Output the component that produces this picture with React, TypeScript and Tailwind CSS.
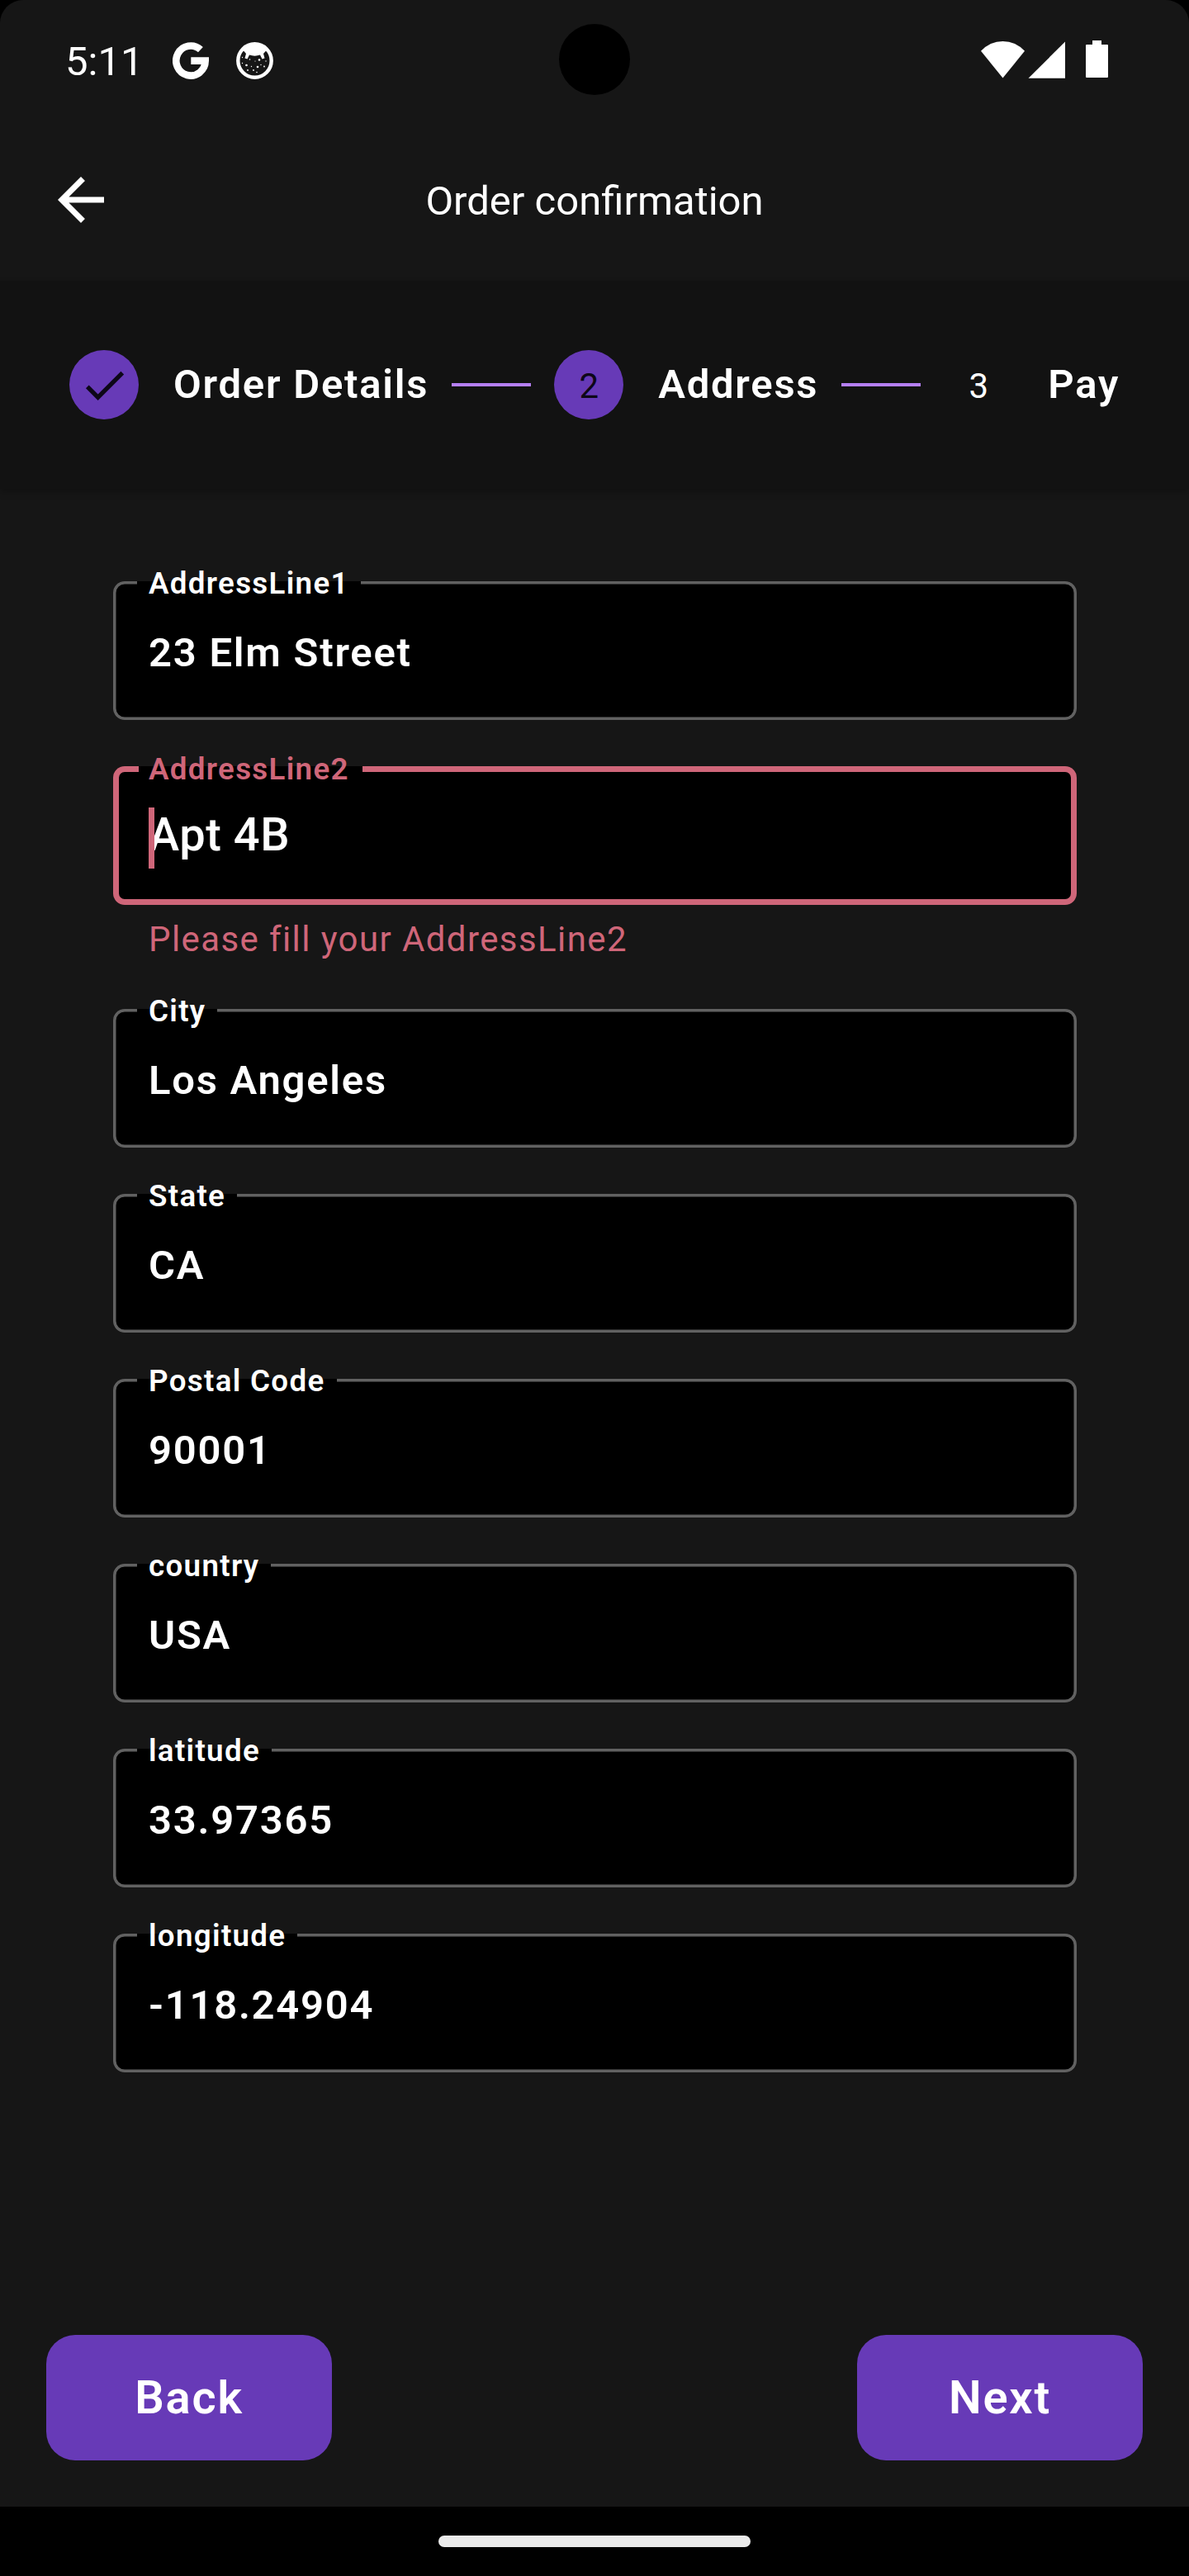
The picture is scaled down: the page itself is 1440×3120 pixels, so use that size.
import React from "react";

function GoogleIcon() {
  return (
    <svg className="size-[45px]" viewBox="0 0 45 45" fill="none">
      <path d="M33.9 9.2A17.7 18 0 1 0 39.7 22.6H22.3" stroke="#fff" strokeWidth="8.6" />
    </svg>
  );
}

function CatIcon() {
  return (
    <svg className="size-[45px]" viewBox="0 0 45 45">
      <circle cx="22.5" cy="22.5" r="20.2" fill="none" stroke="#fff" strokeWidth="4.4" />
      <path
        d="M7 8.5C15-1 30-1 38 8.5L35.5 11.2L33 14L34.5 19.5L31.5 20.5L29 15.5C25 17 20 17 16 15.5L13.5 20.5L10.5 19.5L12 14L9 10.5Z"
        fill="#fff"
      />
      <g fill="#fff">
        <circle cx="12.5" cy="28" r="1.3" />
        <circle cx="28" cy="21.5" r="1.3" />
        <circle cx="26" cy="30" r="1.3" />
        <circle cx="16.5" cy="21" r="0.8" />
        <circle cx="23" cy="23" r="0.6" />
        <circle cx="18.5" cy="29.5" r="0.7" />
        <circle cx="14" cy="34" r="0.9" />
        <circle cx="21" cy="34" r="0.9" />
        <circle cx="25" cy="36.5" r="0.8" />
        <circle cx="34" cy="29.5" r="0.9" />
        <circle cx="30" cy="27.5" r="0.7" />
        <circle cx="36" cy="23" r="0.7" />
        <circle cx="7.5" cy="18.5" r="0.7" />
        <circle cx="7.5" cy="25.5" r="0.7" />
      </g>
    </svg>
  );
}

function StatusBar() {
  return (
    <div className="relative flex h-[144px] items-center px-[79px]">
      <span className="mt-[4px] text-[49px] leading-none text-white">5:11</span>
      <div className="ml-[35.5px] mt-[2px] flex gap-[32px]">
        <GoogleIcon />
        <CatIcon />
      </div>
      {/* Camera cut-out */}
      <div className="absolute left-[677px] top-[29px] size-[86px] rounded-full bg-black" />
      <svg className="ml-auto h-[46px] w-[173px]" viewBox="1188 49 173 46" fill="#fff">
        <path d="M1188 61.8Q1199 50 1214.500 50T1241 61.8L1214.500 94.500Z" />
        <path d="M1245.500 94.700L1290 50.500V94.700Z" />
        <path d="M1323 49h11v5h7q1 0 1 1v38q0 1-1 1h-25q-1 0-1-1v-38q0-1 1-1h7z" />
      </svg>
    </div>
  );
}

function TitleBar() {
  return (
    <header className="flex h-[196px] items-center px-[56px]">
      <svg className="size-[84px] shrink-0" viewBox="0 0 24 24" fill="#fff">
        <path d="M20 11H7.830l5.590-5.590L12 4l-8 8 8 8 1.410-1.410L7.830 13H20v-2z" />
      </svg>
      <h1 className="mr-[84px] mt-[2px] flex-1 text-center text-[49px] leading-none font-normal text-white">
        Order confirmation
      </h1>
    </header>
  );
}

function StepLabel({ children }: { children: React.ReactNode }) {
  return (
    <span className="mb-[2px] ml-[42px] whitespace-nowrap text-[49px] leading-none font-semibold tracking-[1.75px] text-white">
      {children}
    </span>
  );
}

function Connector() {
  return <div className="mx-[28px] h-[4px] flex-1 bg-[#b57ff5]" />;
}

function Stepper() {
  return (
    <section className="relative z-10 flex h-[252px] items-center bg-[#121212] px-[84px] shadow-[0_4px_8px_rgba(0,0,0,0.25)]">
      <div className="flex size-[84px] shrink-0 items-center justify-center rounded-full bg-[#673ab7]">
        <svg className="size-[63px]" viewBox="0 0 24 24" fill="#0d0718">
          <path d="M9 16.170L4.830 12l-1.420 1.410L9 19 21 7l-1.410-1.410z" />
        </svg>
      </div>
      <StepLabel>Order Details</StepLabel>
      <Connector />
      <div className="flex size-[84px] shrink-0 items-center justify-center rounded-full bg-[#673ab7] pt-[3px] text-[42px] leading-none text-[#0d0718]">
        2
      </div>
      <StepLabel>Address</StepLabel>
      <Connector />
      <div className="flex size-[84px] shrink-0 items-center justify-center rounded-full pt-[3px] text-[42px] leading-none text-white">
        3
      </div>
      <StepLabel>Pay</StepLabel>
    </section>
  );
}

function Field({ label, value }: { label: string; value: string }) {
  return (
    <div className="relative flex h-[168px] items-center rounded-[14px] bg-black px-[43.5px] pt-[4px] shadow-[inset_0_0_0_3.5px_#616161]">
      <label className="absolute left-[29.5px] top-0 flex h-[4px] items-center bg-black px-[14px]">
        <span className="mt-[2px] whitespace-nowrap text-[36.75px] leading-none font-semibold tracking-[1.3125px] text-white">
          {label}
        </span>
      </label>
      <span className="whitespace-nowrap text-[49px] leading-none font-semibold tracking-[1.75px] text-white">
        {value}
      </span>
    </div>
  );
}

function ErrorField() {
  return (
    <div className="h-[238px]">
      <div className="relative flex h-[168px] items-center rounded-[14px] bg-black px-[43.5px] pb-[2px] shadow-[inset_0_0_0_7px_#cf6679]">
        <label className="absolute left-[31.5px] top-0 flex h-[7px] items-center bg-black pl-[12px] pr-[16px]">
          <span className="mt-[2px] whitespace-nowrap text-[36.75px] leading-none font-semibold tracking-[1.3125px] text-[#cf6679]">
            AddressLine2
          </span>
        </label>
        <span className="whitespace-nowrap text-[56px] leading-none font-medium tracking-[0.525px] text-white">
          Apt 4B
        </span>
        {/* Text cursor */}
        <div className="absolute left-[43px] top-[50px] h-[74px] w-[7px] bg-[#cf6679]" />
      </div>
      <p className="mt-[17px] pl-[43.5px] text-[42px] leading-[49px] tracking-[1.4px] text-[#cf6679]">
        Please fill your AddressLine2
      </p>
    </div>
  );
}

const fields = [
  ["City", "Los Angeles"],
  ["State", "CA"],
  ["Postal Code", "90001"],
  ["country", "USA"],
  ["latitude", "33.97365"],
  ["longitude", "-118.24904"],
];

function ActionButton({ children }: { children: React.ReactNode }) {
  return (
    <button className="h-[152px] w-[346px] rounded-[35px] bg-[#673ab7] text-[56px] leading-none font-semibold tracking-[1.75px] text-white">
      {children}
    </button>
  );
}

export default function App() {
  return (
    <div className="w-[1440px] bg-black font-['Roboto',sans-serif]">
      <div className="flex h-[3036px] flex-col rounded-t-[28px] bg-[#161616]">
        <StatusBar />
        <TitleBar />
        <Stepper />
        <main className="flex flex-col gap-[56px] px-[136.5px] pt-[112px]">
          <Field label="AddressLine1" value="23 Elm Street" />
          <ErrorField />
          {fields.map(([label, value]) => (
            <Field key={label} label={label} value={value} />
          ))}
        </main>
        <footer className="mt-auto flex justify-between px-[56px] pb-[56px]">
          <ActionButton>Back</ActionButton>
          <ActionButton>Next</ActionButton>
        </footer>
      </div>
      <div className="flex h-[84px] items-center justify-center">
        <div className="h-[14px] w-[378px] rounded-full bg-[#ebebeb]" />
      </div>
    </div>
  );
}
